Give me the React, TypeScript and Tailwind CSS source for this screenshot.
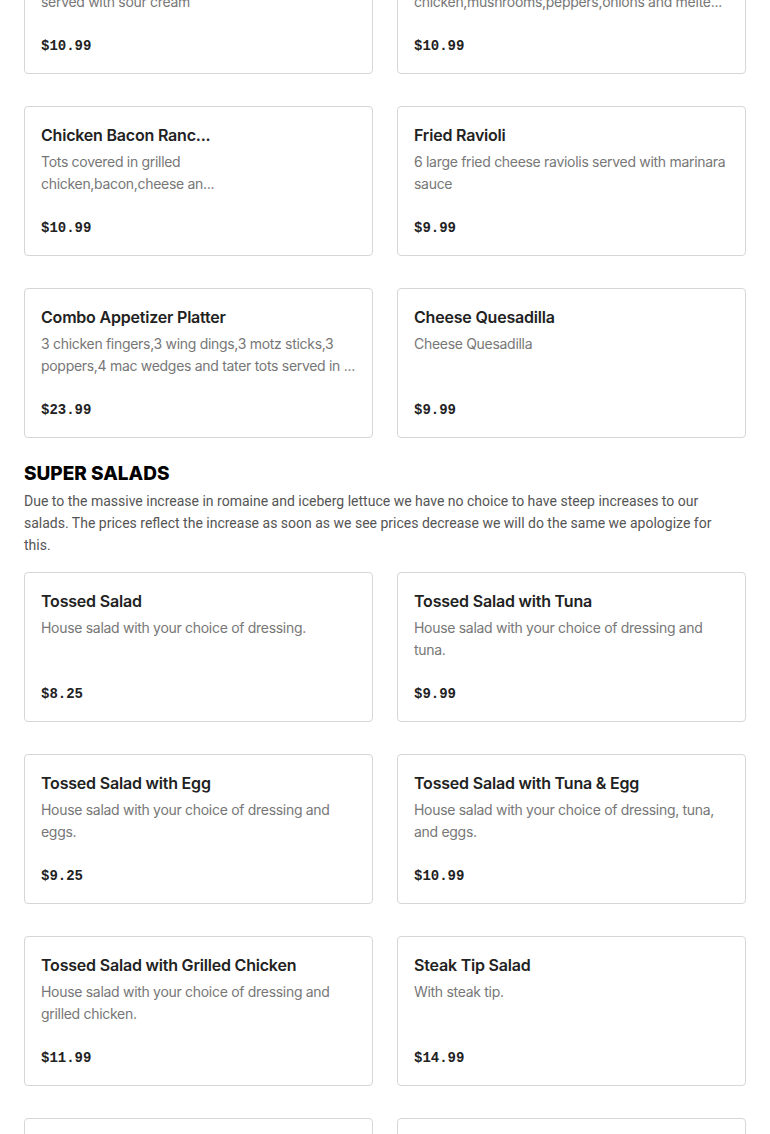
type Item = { name: string; desc: string; price: string }

const appetizers: Item[] = [
  { name: "Loaded Tots", desc: "Tots covered in cheese,bacon and scallions\nserved with sour cream", price: "$10.99" },
  { name: "Chicken Philly Tots", desc: "Tots covered in grilled\nchicken,mushrooms,peppers,onions and melte...", price: "$10.99" },
  { name: "Chicken Bacon Ranc...", desc: "Tots covered in grilled\nchicken,bacon,cheese an...", price: "$10.99" },
  { name: "Fried Ravioli", desc: "6 large fried cheese raviolis served with marinara sauce", price: "$9.99" },
  { name: "Combo Appetizer Platter", desc: "3 chicken fingers,3 wing dings,3 motz sticks,3 poppers,4 mac wedges and tater tots served in ...", price: "$23.99" },
  { name: "Cheese Quesadilla", desc: "Cheese Quesadilla", price: "$9.99" },
]

const salads: Item[] = [
  { name: "Tossed Salad", desc: "House salad with your choice of dressing.", price: "$8.25" },
  { name: "Tossed Salad with Tuna", desc: "House salad with your choice of dressing and tuna.", price: "$9.99" },
  { name: "Tossed Salad with Egg", desc: "House salad with your choice of dressing and eggs.", price: "$9.25" },
  { name: "Tossed Salad with Tuna & Egg", desc: "House salad with your choice of dressing, tuna, and eggs.", price: "$10.99" },
  { name: "Tossed Salad with Grilled Chicken", desc: "House salad with your choice of dressing and grilled chicken.", price: "$11.99" },
  { name: "Steak Tip Salad", desc: "With steak tip.", price: "$14.99" },
  { name: "Chef Salad", desc: "Ham, turkey, cheese and egg over house salad.", price: "$12.99" },
  { name: "Greek Salad", desc: "Feta, olives, tomatoes and onions.", price: "$11.99" },
]

function MenuCard({ item }: { item: Item }) {
  return (
    <div className="border border-[#d6d6d6] rounded-[4px] bg-white px-4 pt-4 pb-[17px]">
      <h3 className="text-[16px] leading-6 font-semibold text-[#222] truncate tracking-[-0.2px]">{item.name}</h3>
      <p className="mt-1 h-[44px] text-[14px] leading-[22px] text-[#777] tracking-[-0.3px] whitespace-pre-line line-clamp-2">
        {item.desc}
      </p>
      <div className="mt-[23px] font-['Liberation_Mono',monospace] font-bold text-[14px] leading-5 text-[#222]">
        {item.price}
      </div>
    </div>
  )
}

export default function App() {
  return (
    <div className="h-[1134px] overflow-hidden bg-white px-6 font-['Inter',sans-serif]">
      <div className="-mt-[76px] grid grid-cols-2 gap-x-6 gap-y-8">
        {appetizers.map((item) => (
          <MenuCard key={item.name} item={item} />
        ))}
      </div>

      <section className="mt-6">
        <h2 className="text-[19px] leading-6 font-extrabold uppercase text-black">Super Salads</h2>
        <p className="mt-1 pr-2 text-[14px] leading-[22px] text-[#555] font-['Roboto',sans-serif]">
          Due to the massive increase in romaine and iceberg lettuce we have no choice to have steep increases to our
          salads. The prices reflect the increase as soon as we see prices decrease we will do the same we apologize for
          this.
        </p>
        <div className="mt-4 grid grid-cols-2 gap-x-6 gap-y-8">
          {salads.map((item) => (
            <MenuCard key={item.name} item={item} />
          ))}
        </div>
      </section>
    </div>
  )
}
